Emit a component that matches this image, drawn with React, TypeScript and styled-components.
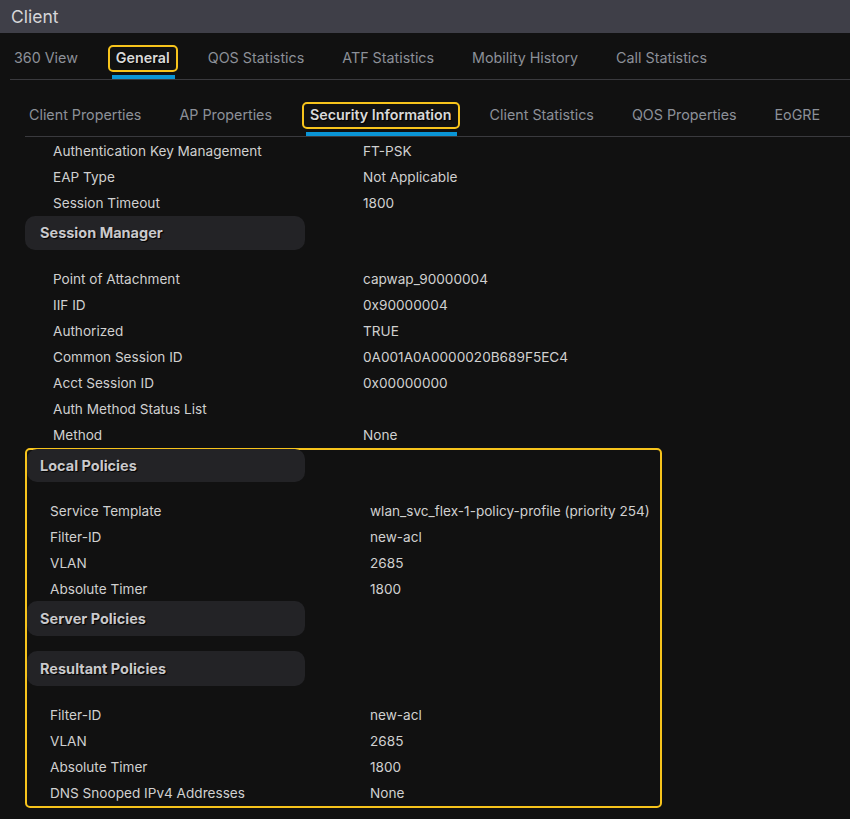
import React from "react";
import styled, { createGlobalStyle } from "styled-components";

const GlobalStyle = createGlobalStyle`
  html, body {
    margin: 0;
    padding: 0;
    background: #111111;
  }
  body {
    font-family: Inter, "Liberation Sans", Arial, sans-serif;
    color: #d2d2d2;
  }
`;

type Row = [string, string];

const topTabs = ["360 View", "General", "QOS Statistics", "ATF Statistics", "Mobility History", "Call Statistics"];
const subTabs = ["Client Properties", "AP Properties", "Security Information", "Client Statistics", "QOS Properties", "EoGRE"];

const securityRows: Row[] = [
  ["Authentication Key Management", "FT-PSK"],
  ["EAP Type", "Not Applicable"],
  ["Session Timeout", "1800"],
];

const sessionRows: Row[] = [
  ["Point of Attachment", "capwap_90000004"],
  ["IIF ID", "0x90000004"],
  ["Authorized", "TRUE"],
  ["Common Session ID", "0A001A0A0000020B689F5EC4"],
  ["Acct Session ID", "0x00000000"],
  ["Auth Method Status List", ""],
  ["Method", "None"],
];

const localRows: Row[] = [
  ["Service Template", "wlan_svc_flex-1-policy-profile (priority 254)"],
  ["Filter-ID", "new-acl"],
  ["VLAN", "2685"],
  ["Absolute Timer", "1800"],
];

const resultantRows: Row[] = [
  ["Filter-ID", "new-acl"],
  ["VLAN", "2685"],
  ["Absolute Timer", "1800"],
  ["DNS Snooped IPv4 Addresses", "None"],
];

const PropertyRows = ({ rows, pad, labelWidth, gap }: { rows: Row[]; pad: number; labelWidth: number; gap: number }) => (
  <Rows $pad={pad} $labelWidth={labelWidth} $gap={gap}>
    {rows.map(([k, v]) => (
      <React.Fragment key={k}>
        <Cell>{k}</Cell>
        <Cell>{v}</Cell>
      </React.Fragment>
    ))}
  </Rows>
);

export default function App() {
  return (
    <>
      <GlobalStyle />
      <TitleBar>Client</TitleBar>
      <TabBar $indent={10} $top={12}>
        {topTabs.map((t) => (
          <Tab key={t}>
            <TabLabel $active={t === "General"}>{t}</TabLabel>
            <Underline $active={t === "General"} />
          </Tab>
        ))}
      </TabBar>
      <TabBar $indent={25} $top={22}>
        {subTabs.map((t) => (
          <Tab key={t}>
            <TabLabel $active={t === "Security Information"}>{t}</TabLabel>
            <Underline $active={t === "Security Information"} />
          </Tab>
        ))}
      </TabBar>

      <Content>
        <PropertyRows rows={securityRows} pad={28} labelWidth={310} gap={0} />
        <SectionHeader $height={34}>Session Manager</SectionHeader>
        <PropertyRows rows={sessionRows} pad={28} labelWidth={310} gap={16} />

        <Highlight>
          <SectionHeader $inset $height={33} $gapTop={-1}>Local Policies</SectionHeader>
          <PropertyRows rows={localRows} pad={23} labelWidth={320} gap={16} />
          <SectionHeader $inset $height={35} $gapTop={-1}>Server Policies</SectionHeader>
          <SectionHeader $inset $height={35} $gapTop={15}>Resultant Policies</SectionHeader>
          <PropertyRows rows={resultantRows} pad={23} labelWidth={320} gap={16} />
        </Highlight>
      </Content>
    </>
  );
}

const TitleBar = styled.div`
  height: 33px;
  background: #3f3f48;
  color: #d6d6d8;
  font-size: 17.5px;
  line-height: 33px;
  padding-left: 11px;
`;

const TabBar = styled.div<{ $indent: number; $top: number }>`
  display: flex;
  gap: 22px;
  margin-left: ${(p) => p.$indent}px;
  padding-top: ${(p) => p.$top}px;
  border-bottom: 1px solid #3a3a3e;
  & > :first-child {
    margin-left: -4px;
  }
`;

const Tab = styled.div`
  display: flex;
  flex-direction: column;
`;

const TabLabel = styled.div<{ $active?: boolean }>`
  box-sizing: border-box;
  height: 27px;
  line-height: 22px;
  padding: 0 6px;
  border: 2px solid ${(p) => (p.$active ? "#f7c41c" : "transparent")};
  border-radius: 5px;
  font-size: 14.3px;
  white-space: nowrap;
  color: ${(p) => (p.$active ? "#d9d9d9" : "#8c9098")};
  font-weight: ${(p) => (p.$active ? 600 : 400)};
  text-shadow: ${(p) => (p.$active ? "1px 1px 1px #000" : "none")};
`;

const Underline = styled.div<{ $active?: boolean }>`
  height: 4px;
  margin: 3px 3px 0 4px;
  background: ${(p) => (p.$active ? "#0a95d6" : "transparent")};
`;

const Content = styled.div`
  padding: 1px 0 0 25px;
`;

const Rows = styled.div<{ $pad: number; $labelWidth: number; $gap: number }>`
  display: grid;
  grid-template-columns: ${(p) => p.$labelWidth}px auto;
  grid-auto-rows: 26px;
  align-items: center;
  padding-left: ${(p) => p.$pad}px;
  margin-top: ${(p) => p.$gap}px;
  font-size: 13.6px;
`;

const Cell = styled.div`
  color: #d0d0d0;
  white-space: nowrap;
`;

const SectionHeader = styled.div<{ $height: number; $gapTop?: number; $inset?: boolean }>`
  box-sizing: border-box;
  width: ${(p) => (p.$inset ? 278 : 280)}px;
  height: ${(p) => p.$height}px;
  line-height: ${(p) => p.$height}px;
  padding-left: ${(p) => (p.$inset ? 13 : 15)}px;
  margin-top: ${(p) => p.$gapTop ?? 0}px;
  background: #232326;
  border-radius: 10px;
  color: #c9c9cc;
  font-size: 14.5px;
  font-weight: 700;
  text-shadow: 1px 1px 1px #000;
`;

const Highlight = styled.div`
  box-sizing: border-box;
  width: 637px;
  border: 2px solid #f7c41c;
  border-radius: 5px;
`;
